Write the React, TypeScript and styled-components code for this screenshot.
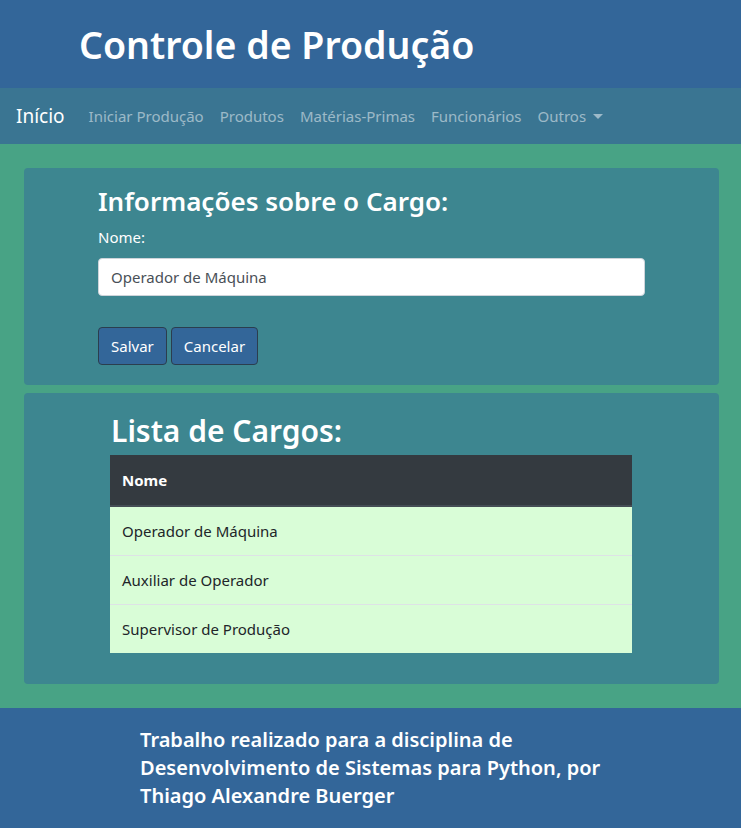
import React from "react";
import styled, { createGlobalStyle } from "styled-components";

const Global = createGlobalStyle`
  html, body { margin: 0; padding: 0; }
  body { font-family: "Noto Sans", "Open Sans", sans-serif; background: #336699; color: #212529; }
  * { box-sizing: border-box; }
`;

const Header = styled.header`
  background: #336699;
  height: 88px;
  display: flex;
  align-items: center;
  padding-left: 79px;
`;

const Title = styled.h1`
  margin: 0;
  color: #fff;
  font-size: 37.5px;
  font-weight: 600;
  line-height: 1.2;
`;

const Nav = styled.nav`
  background: #3a7592;
  height: 56px;
  display: flex;
  align-items: center;
  padding: 0 16px;
`;

const Brand = styled.a`
  color: #fff;
  font-size: 19px;
  margin-right: 16px;
  text-decoration: none;
`;

const NavLink = styled.a`
  color: rgba(255, 255, 255, 0.5);
  font-size: 15px;
  padding: 0 8px;
  text-decoration: none;
  display: flex;
  align-items: center;
`;

const Caret = styled.span`
  display: inline-block;
  margin-left: 7px;
  border-top: 5px solid rgba(255, 255, 255, 0.5);
  border-left: 5px solid transparent;
  border-right: 5px solid transparent;
`;

const Main = styled.main`
  background: #48a385;
  padding: 24px 22px 24px 24px;
  display: flex;
  flex-direction: column;
  gap: 8px;
`;

const Card = styled.section<{ $pad: string }>`
  background: #3d8690;
  border-radius: 4px;
  padding: ${(p) => p.$pad};
`;

const FormHeading = styled.h3`
  margin: 0 0 10px;
  color: #fff;
  font-size: 26px;
  font-weight: 600;
  line-height: 1.2;
`;

const Label = styled.label`
  display: block;
  color: #fff;
  font-size: 15px;
  margin-bottom: 11px;
`;

const Input = styled.input`
  display: block;
  width: 547px;
  height: 38px;
  border: 1px solid #ced4da;
  border-radius: 4px;
  padding: 6px 12px;
  font-family: inherit;
  font-size: 15px;
  color: #495057;
  background: #fff;
`;

const Buttons = styled.div`
  display: flex;
  gap: 4px;
  margin-top: 31px;
`;

const Button = styled.button`
  height: 38px;
  background: #336699;
  color: #fff;
  border: 1px solid #2b3e4e;
  border-radius: 4px;
  padding: 0 12px;
  font-family: inherit;
  font-size: 15px;
`;

const ListHeading = styled.h2`
  margin: 0 0 6px;
  color: #fff;
  font-size: 30px;
  font-weight: 600;
  line-height: 1.2;
  padding-left: 1px;
`;

const Table = styled.table`
  width: 522px;
  border-collapse: collapse;
`;

const Th = styled.th`
  background: #343a40;
  color: #fff;
  text-align: left;
  font-size: 15px;
  font-weight: 700;
  height: 51px;
  padding: 0 12px;
  border-bottom: 2px solid #454d55;
`;

const Td = styled.td`
  background: #d9fdd7;
  color: #212529;
  font-size: 15px;
  height: 49px;
  padding: 0 12px;
  border-top: 1px solid #dee2e6;
`;

const Footer = styled.footer`
  background: #336699;
  min-height: 124px;
  padding: 18px 0 0 140px;
`;

const FooterText = styled.p`
  margin: 0;
  width: 525px;
  color: #fff;
  font-size: 20px;
  font-weight: 600;
  line-height: 28px;
`;

const cargos = ["Operador de Máquina", "Auxiliar de Operador", "Supervisor de Produção"];

export default function App() {
  return (
    <>
      <Global />
      <Header>
        <Title>Controle de Produção</Title>
      </Header>
      <Nav>
        <Brand href="#">Início</Brand>
        <NavLink href="#">Iniciar Produção</NavLink>
        <NavLink href="#">Produtos</NavLink>
        <NavLink href="#">Matérias-Primas</NavLink>
        <NavLink href="#">Funcionários</NavLink>
        <NavLink href="#">
          Outros
          <Caret />
        </NavLink>
      </Nav>
      <Main>
        <Card $pad="18px 74px 20px 74px">
          <FormHeading>Informações sobre o Cargo:</FormHeading>
          <Label>Nome:</Label>
          <Input defaultValue="Operador de Máquina" />
          <Buttons>
            <Button>Salvar</Button>
            <Button>Cancelar</Button>
          </Buttons>
        </Card>
        <Card $pad="20px 86px 31px 86px">
          <ListHeading>Lista de Cargos:</ListHeading>
          <Table>
            <thead>
              <tr>
                <Th>Nome</Th>
              </tr>
            </thead>
            <tbody>
              {cargos.map((c) => (
                <tr key={c}>
                  <Td>{c}</Td>
                </tr>
              ))}
            </tbody>
          </Table>
        </Card>
      </Main>
      <Footer>
        <FooterText>
          Trabalho realizado para a disciplina de Desenvolvimento de Sistemas para Python, por Thiago Alexandre Buerger
        </FooterText>
      </Footer>
    </>
  );
}
